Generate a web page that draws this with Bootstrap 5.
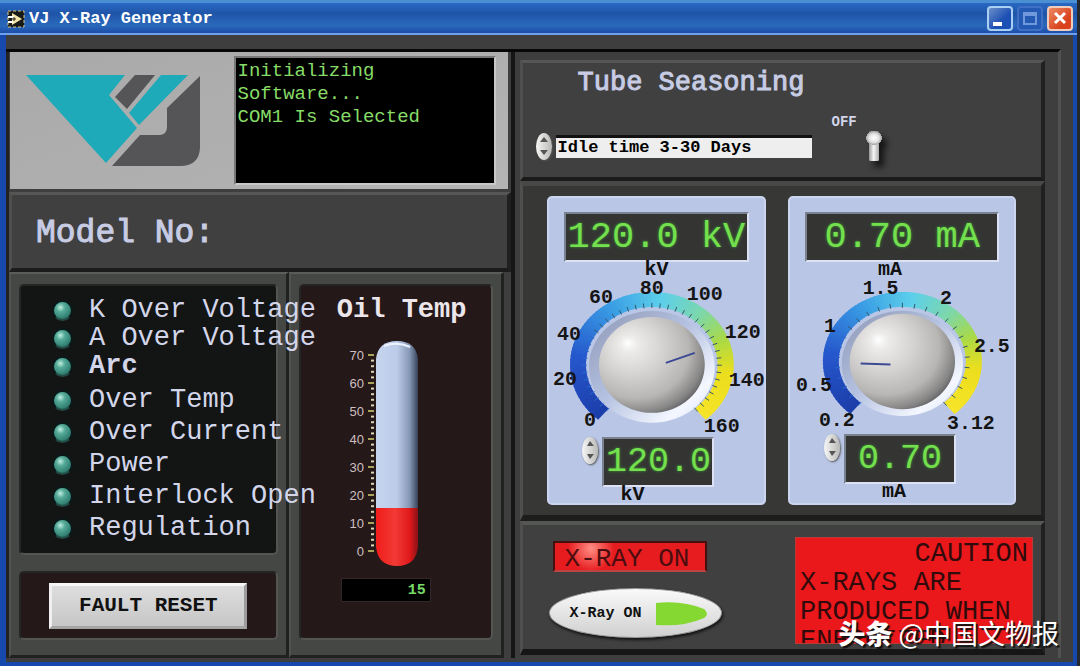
<!DOCTYPE html>
<html lang="en">
<head>
<meta charset="utf-8">
<meta name="viewport" content="width=device-width, initial-scale=1">
<title>VJ X-Ray Generator</title>
<link href="https://cdn.jsdelivr.net/npm/bootstrap@5.3.0/dist/css/bootstrap.min.css" rel="stylesheet">
<style>
  body { background: #25282c; font-family: "Liberation Mono", "Noto Sans CJK SC", monospace; color: #d3d6ea; line-height: 1; }
  .app-window { background: #3d3e3d; border: solid #1749ac; border-width: 0 4px 4px 6px; margin-right: 3px; position: relative; }
  .title-bar { height: 35px; margin: 0 -4px 0 -6px; padding: 1px 4px 0 7px; border-top: 3px solid #4a8fd2; border-bottom: 2px solid #6ea1ea; background: linear-gradient(#2a68c4, #1f55a8 35%, #2a68bb 75%, #1c4da9); color: #fff; }
  .title-text { font-size: 17px; font-weight: 700; }
  .win-btn { width: 26px; height: 25px; border: 2px solid #a9d0f3; border-radius: 4px; background: linear-gradient(135deg, #6d8fc8, #1c50b4 60%); padding: 0; }
  .win-btn.dim { border-color: #3f70c4; background: #2459b4; }
  .win-btn.shut { border-color: #f1cdbd; background: linear-gradient(135deg, #ec8a62, #d9421c 70%); }
  .win-btn svg { display: block; width: 100%; height: 100%; }
  .workspace { display: grid; grid-template-columns: minmax(0, 510fr) minmax(0, 545fr); margin: 14px 12px 4px 0; border-top: 3px solid #080808; border-right: 3px solid #50524f; }
  .col-left { border-right: 4px solid #141515; border-left: 3px solid #222; }
  .panel { background: #3f403f; border: solid; border-width: 3px 4px 4px 3px; border-color: #555754 #1f201f #1a1b1a #4f504e; }
  .logo-panel { background: linear-gradient(160deg, #a9a9a9, #b4b4b4); height: 137px; padding: 4px 12px 4px 8px; margin: 0 3px 3px 1px; }
  .terminal { background: #000; color: #87dc68; width: 262px; font-size: 19px; line-height: 23px; border: 2px solid; border-color: #777 #c8c8c8 #c8c8c8 #777; padding: 2px; }
  .model-panel { height: 80px; padding: 4px 24px 0; }
  .model-text { font-size: 33px; color: #c7cce4; -webkit-text-stroke: 1px #c7cce4; }
  .lower-left { grid-template-columns: minmax(0, 280fr) minmax(0, 215fr); padding-right: 7px; }
  .raised { background: #454745; border: solid; border-width: 2px 3px 3px 2px; border-color: #5b5d5a #202120 #202120 #51534f; padding: 10px 8px 15px; }
  .well { border-radius: 5px; background: #241819; border: 2px solid; border-color: #252525 #535552 #535552 #252525; }
  .fault-well { background: #121514; padding: 10px 0 9px 31px; font-size: 27px; position: relative; z-index: 2; }
  .fault-well li { height: 32px; white-space: nowrap; }
  .fault-well .tight li { height: 28px; }
  .led { width: 21px; height: 21px; border-radius: 50%; flex: none; border: 2px solid #0a1919; border-bottom-color: #234b45; background: radial-gradient(circle at 38% 32%, #c0eee0 0, #55aa98 28%, #358577 65%, #19483f 100%); }
  .reset-btn { width: 198px; height: 46px; font-size: 21px; font-weight: 700; color: #111; border: 3px solid; border-color: #f7f7f7 #9c9c9c #a5a5a5 #f0f0f0; background: linear-gradient(#dedede, #c6c6c6); padding: 0; }
  .oil-title { font-size: 27px; font-weight: 700; color: #ece6ea; padding-left: 12px; }
  .oil-out { width: 90px; height: 24px; background: #000; color: #78da66; font-size: 15px; font-weight: 700; border: 1px solid #332628; margin-right: 20px; }
  .col-right { padding: 8px 13px 3px 5px; }
  .tube-panel { height: 121px; padding: 4px 12px 0 13px; }
  .tube-title { font-size: 27px; color: #c7cce4; -webkit-text-stroke: 1px #c7cce4; padding-left: 42px; }
  .season { width: 256px; height: 23px; font-size: 17px; font-weight: 700; background: #eee; color: #000; border: 0; border-top: 3px solid #111; border-radius: 0; appearance: none; padding: 0 2px; line-height: 20px; }
  .spin { width: 16px; height: 27px; border-radius: 50%; background: linear-gradient(90deg, #f6f6f6, #b9bab6); box-shadow: 1px 1px 2px #555; overflow: hidden; flex: none; }
  .spin button { border: 0; background: none; padding: 0; height: 13px; line-height: 0; }
  .off-text { font-size: 14px; font-weight: 700; }
  .toggle { appearance: none; border: 0; width: 18px; height: 30px; margin: 0; background: radial-gradient(ellipse 8px 7px at 50% 7px, #fff 0, #e4e4e4 60%, #aaa 96%, transparent 100%), linear-gradient(90deg, transparent 20%, #999 22%, #f5f5f5 48%, #aaa 78%, transparent 80%); border-radius: 8px 8px 6px 6px; filter: drop-shadow(5px 6px 3px #151515); }
  .gauge-panel { padding: 10px 25px 11px 24px; background: #373736; height: 340px; border-top: 5px solid #4a4846; border-bottom: 6px solid #1d1d1c; }
  .gauge-grid { grid-template-columns: minmax(0, 219fr) minmax(0, 227fr); column-gap: 22px; }
  .gauge { background: #b9c6e6; border: 2px solid #cbd5ef; border-radius: 5px; color: #111; font-size: 20px; padding: 14px 15px 0; }
  .readout { background: #343533; color: #74e04d; font-size: 37px; text-shadow: 0 0 3px #3f9c35; border: 2px solid; border-color: #7a8191 #dce2f4 #dce2f4 #7a8191; height: 50px; text-align: center; border-radius: 0; padding: 0; white-space: pre; }
  .set-out { width: 112px; font-size: 35px; }
  .unit { font-weight: 700; height: 16px; line-height: 16px; }
  .dial { width: 100%; height: auto; display: block; overflow: visible; }
  .dial text { font-size: 20px; font-weight: 700; fill: #151515; text-anchor: middle; }
  .thermo text { font-family: "Liberation Sans", sans-serif; font-size: 13px; fill: #cfbfc0; text-anchor: end; }
  .ray-panel { padding: 12px 8px 5px 26px; border-top-width: 4px; border-bottom: 6px solid #161616; }
  .ray-lamp { width: 154px; height: 31px; font-size: 26px; line-height: 32px; color: #4c0d10; border: 2px solid #411; border-bottom-color: #b44; background: radial-gradient(circle at 24% 20%, #ff8d83, transparent 20%), #e71c1f; padding-left: 10px; }
  .ray-btn { width: 173px; height: 50px; border-radius: 50%; border: 1px solid #999; background: linear-gradient(#fafafa, #d0d0d0); box-shadow: 1px 2px 3px #111; font-size: 15px; font-weight: 700; color: #111; padding: 0 12px 0 20px; }
  .caution { width: 238px; height: 107px; background: #ea171b; border: 1px solid #bb3a38; color: #310b0c; font-size: 27px; line-height: 29px; padding: 2px 4px; overflow: hidden; }
  .stamp { position: absolute; right: 14px; bottom: 13px; font-family: "Noto Sans CJK SC", sans-serif; font-size: 27px; line-height: 32px; color: #fff; text-shadow: 2px 2px 1px #111; z-index: 5; }
  .stamp b { font-weight: 900; }
</style>
</head>
<body>
<div class="app-window min-vh-100 d-flex flex-column">
  <header class="title-bar d-flex align-items-center">
    <svg width="18" height="18" viewBox="0 0 18 18" aria-hidden="true"><path d="M1 1h16v16H1z" fill="#181a17" stroke="#d9c983" stroke-dasharray="3 2"/><path d="M5 3l10 6-10 6z" fill="#f4e6a8"/><path d="M1 7h6M1 12h5" stroke="#fff" stroke-width="2"/><path d="M7 7v4M5 9h4" stroke="#222"/></svg>
    <span class="title-text ms-1 me-auto">VJ X-Ray Generator</span>
    <div class="d-flex gap-1">
      <button class="win-btn" aria-label="Minimize"><svg viewBox="0 0 22 21"><path d="M4 14h9v4H4z" fill="#fff"/></svg></button>
      <button class="win-btn dim" aria-label="Maximize"><svg viewBox="0 0 22 21"><path d="M5 5h12v11H5zM5 7h12" fill="none" stroke="#7098dc" stroke-width="2"/></svg></button>
      <button class="win-btn shut" aria-label="Close"><svg viewBox="0 0 22 21"><path d="M6 5l10 10M16 5L6 15" stroke="#fff" stroke-width="3"/></svg></button>
    </div>
  </header>

  <main class="workspace flex-grow-1">
    <section class="col-left d-flex flex-column">
      <div class="logo-panel d-flex justify-content-between">
        <svg width="190" height="120" viewBox="18 56 190 120" role="img" aria-label="VJ logo">
          <path d="M26 75H125L109 95 137 128 106 163z" fill="#1eaab8"/>
          <path d="M135 75H155L127 109 115 97z" fill="#555457"/>
          <path d="M161 75H188L139 125 129 113z" fill="#1eaab8"/>
          <path d="M200 76V148Q199 165 182 166H112L140 135H160Q167 134 167 127V108z" fill="#555457"/>
        </svg>
        <div class="terminal">Initializing<br>Software...<br>COM1 Is Selected</div>
      </div>
      <div class="panel model-panel d-flex align-items-center"><span class="model-text">Model No:</span></div>
      <div class="lower-left d-grid flex-grow-1">
        <div class="raised d-flex flex-column">
          <div class="well fault-well">
            <ul class="list-unstyled mb-1 tight">
              <li class="d-flex align-items-center gap-3"><span class="led"></span>K Over Voltage</li>
              <li class="d-flex align-items-center gap-3"><span class="led"></span>A Over Voltage</li>
              <li class="d-flex align-items-center gap-3"><span class="led"></span><b>Arc</b></li>
            </ul>
            <ul class="list-unstyled mb-0">
              <li class="d-flex align-items-center gap-3"><span class="led"></span>Over Temp</li>
              <li class="d-flex align-items-center gap-3"><span class="led"></span>Over Current</li>
              <li class="d-flex align-items-center gap-3"><span class="led"></span>Power</li>
              <li class="d-flex align-items-center gap-3"><span class="led"></span>Interlock Open</li>
              <li class="d-flex align-items-center gap-3"><span class="led"></span>Regulation</li>
            </ul>
          </div>
          <div class="well flex-grow-1 mt-3 d-flex align-items-center justify-content-center">
            <button class="reset-btn">FAULT RESET</button>
          </div>
        </div>
        <div class="raised d-flex flex-column">
          <div class="well flex-grow-1 d-flex flex-column align-items-center">
            <h2 class="oil-title mt-2 mb-2">Oil Temp</h2>
            <svg class="thermo" width="150" height="236" viewBox="320 333 150 236" role="img" aria-label="Oil temperature 15">
              <defs>
                <linearGradient id="glass"><stop offset="0" stop-color="#c6d4ee"/><stop offset=".5" stop-color="#bccce9"/><stop offset=".8" stop-color="#8597b5"/><stop offset="1" stop-color="#37425a"/></linearGradient>
                <linearGradient id="fluid"><stop offset="0" stop-color="#f01c1a"/><stop offset=".45" stop-color="#f23a35"/><stop offset=".8" stop-color="#e0191b"/><stop offset="1" stop-color="#8a1216"/></linearGradient>
              </defs>
              <path d="M375 507V358Q377 340 396 340T417 358V507z" fill="url(#glass)"/>
              <path d="M375 507H417V546Q415 565 396 565T375 546z" fill="url(#fluid)"/>
              <path d="M383 345Q396 340 409 346" stroke="#edf3ff" stroke-width="2" fill="none"/>
            </svg>
            <output class="oil-out d-flex align-items-center justify-content-end px-1 mt-2" aria-label="Oil temperature">15</output>
          </div>
        </div>
      </div>
    </section>

    <section class="col-right d-flex flex-column">
      <div class="panel tube-panel">
        <h1 class="tube-title mb-0">Tube Seasoning</h1>
        <div class="d-flex align-items-center pt-3">
          <span class="spin d-flex flex-column"><button aria-label="Previous mode"><svg width="8" height="5"><path d="M0 5h8L4 0z" fill="#555"/></svg></button><button aria-label="Next mode"><svg width="8" height="5"><path d="M0 0h8L4 5z" fill="#555"/></svg></button></span>
          <select class="season ms-1" aria-label="Tube seasoning mode"><option>Idle time 3-30 Days</option></select>
          <label class="off-text ms-3 mb-5 ps-1" for="season-switch">OFF</label>
          <input class="toggle ms-2" id="season-switch" type="checkbox">
        </div>
      </div>

      <div class="panel gauge-panel">
        <div class="gauge-grid d-grid h-100">
          <div class="gauge">
            <output class="readout d-flex align-items-center justify-content-center">120.0 kV</output>
            <div class="unit text-center">kV</div>
            <svg class="dial" id="dial-kv" viewBox="564 279 186 159" role="img" aria-label="Voltage dial"></svg>
            <div class="d-flex justify-content-center pe-3">
              <span class="spin d-flex flex-column"><button aria-label="Raise kV"><svg width="7" height="5"><path d="M0 5h7L3 0z" fill="#555"/></svg></button><button aria-label="Lower kV"><svg width="7" height="5"><path d="M0 0h7L3 5z" fill="#555"/></svg></button></span>
              <input class="readout set-out ms-1" aria-label="Voltage setpoint" value="120.0">
            </div>
            <div class="unit text-center pe-5">kV</div>
          </div>
          <div class="gauge">
            <output class="readout d-flex align-items-center justify-content-center">0.70 mA</output>
            <div class="unit text-center pe-4">mA</div>
            <svg class="dial" id="dial-ma" viewBox="804 278 195 157" role="img" aria-label="Current dial"></svg>
            <div class="d-flex justify-content-center pe-4">
              <span class="spin d-flex flex-column"><button aria-label="Raise mA"><svg width="7" height="5"><path d="M0 5h7L3 0z" fill="#555"/></svg></button><button aria-label="Lower mA"><svg width="7" height="5"><path d="M0 0h7L3 5z" fill="#555"/></svg></button></span>
              <input class="readout set-out ms-1" aria-label="Current setpoint" value="0.70">
            </div>
            <div class="unit text-center pe-3">mA</div>
          </div>
        </div>
      </div>

      <div class="panel ray-panel d-flex justify-content-between flex-grow-1">
        <div>
          <div class="ray-lamp ms-1 mt-1 mb-3">X-RAY ON</div>
          <button class="ray-btn d-flex align-items-center justify-content-between">X-Ray ON
            <svg width="55" height="27" viewBox="0 0 55 27" aria-hidden="true"><path d="M2 3Q28 0 50 9 56 14 50 18 30 27 2 25z" fill="#85d731"/></svg>
          </button>
        </div>
        <div class="caution"><div class="text-end">CAUTION</div>X-RAYS ARE<br>PRODUCED WHEN<br>ENERGIZED</div>
      </div>
    </section>
  </main>
  <div class="stamp"><b>头条</b> @中国文物报</div>
</div>

<script src="https://cdn.jsdelivr.net/npm/bootstrap@5.3.0/dist/js/bootstrap.bundle.min.js"></script>
<script>
  const NS = 'http://www.w3.org/2000/svg';
  function add(parent, tag, attrs, text) {
    const el = document.createElementNS(NS, tag);
    for (const k in attrs) el.setAttribute(k, attrs[k]);
    if (text !== undefined) el.textContent = text;
    parent.appendChild(el);
    return el;
  }
  // Colour stops along the sweep, from minimum to maximum
  const stops = [[0, [28, 62, 170]], [.2, [38, 88, 205]], [.38, [58, 158, 228]], [.52, [92, 207, 235]], [.64, [125, 215, 170]], [.74, [170, 218, 70]], [.84, [235, 222, 30]], [1, [246, 228, 40]]];
  function hue(t) {
    let i = 1;
    while (i < stops.length - 1 && stops[i][0] < t) i++;
    const [a, c] = stops[i - 1], [b, d] = stops[i], k = Math.min(1, (t - a) / (b - a));
    return 'rgb(' + c.map((v, n) => Math.round(v + (d[n] - v) * k)).join(',') + ')';
  }
  function dial(id, g) {
    const svg = document.getElementById(id), sweep = 278;
    const pt = (t, rx, ry) => { const a = (t * sweep - sweep / 2) * Math.PI / 180; return [g.cx + rx * Math.sin(a), g.cy - ry * Math.cos(a)]; };
    const defs = add(svg, 'defs', {});
    const rim = add(defs, 'linearGradient', { id: id + '-rim', x1: 0, y1: 0, x2: 1, y2: 1 });
    [[0, '#8d97b4'], [.45, '#b4c1e0'], [.8, '#f4f7ff'], [1, '#d5def3']].forEach(s => add(rim, 'stop', { offset: s[0], 'stop-color': s[1] }));
    const ball = add(defs, 'radialGradient', { id: id + '-ball', cx: .38, cy: .38, fx: .27, fy: .27, r: .72 });
    [[0, '#fff'], [.12, '#ecebea'], [.4, '#d5d3d1'], [.7, '#b8b6b4'], [.88, '#858484'], [1, '#4a4b50']].forEach(s => add(ball, 'stop', { offset: s[0], 'stop-color': s[1] }));
    const n = 90;
    for (let i = 0; i < n; i++) {
      const a = i / n, b = Math.min(1, (i + 1.4) / n);
      const p = [pt(a, g.rx, g.ry), pt(b, g.rx, g.ry), pt(b, g.rx - 16, g.ry - 15), pt(a, g.rx - 16, g.ry - 15)];
      add(svg, 'polygon', { points: p.map(q => q.join(',')).join(' '), fill: hue(a) });
    }
    add(svg, 'ellipse', { cx: g.cx, cy: g.cy + 2, rx: g.rx - 19, ry: g.ry - 17, fill: `url(#${id}-rim)` });
    for (let i = 0; i <= g.ticks; i++) {
      const t = i / g.ticks, p = pt(t, g.rx - 17, g.ry - 16), q = pt(t, g.rx - 12, g.ry - 11);
      add(svg, 'line', { x1: p[0], y1: p[1], x2: q[0], y2: q[1], stroke: t < .3 ? '#2c68ca' : '#34566a', 'stroke-width': 1 });
    }
    add(svg, 'ellipse', { cx: g.cx, cy: g.cy, rx: 53, ry: 48, fill: `url(#${id}-ball)` });
    add(svg, 'line', Object.assign({ stroke: '#3c4a94', 'stroke-width': 2 }, g.needle));
    g.labels.forEach(l => add(svg, 'text', { x: l[1], y: l[2] }, l[0]));
  }
  dial('dial-kv', { cx: 652, cy: 366, rx: 82, ry: 73, ticks: 40, needle: { x1: 666, y1: 364, x2: 695, y2: 354 },
    labels: [['0', 590, 427], ['20', 565, 386], ['40', 569, 341], ['60', 601, 304], ['80', 652, 295], ['100', 705, 301], ['120', 743, 339], ['140', 747, 387], ['160', 722, 433]] });
  dial('dial-ma', { cx: 902, cy: 362, rx: 80, ry: 70, ticks: 26, needle: { x1: 860, y1: 364, x2: 890, y2: 365 },
    labels: [['0.2', 836, 427], ['0.5', 813, 392], ['1', 829, 332], ['1.5', 880, 294], ['2', 946, 304], ['2.5', 992, 352], ['3.12', 971, 430]] });

  const thermo = document.querySelector('.thermo');
  for (let v = 0; v <= 70; v += 2) {
    const y = 550 - v * 2.8, major = v % 10 === 0;
    add(thermo, 'line', { x1: major ? 367 : 370, y1: y, x2: 373, y2: y, stroke: major ? '#a9a25a' : '#ddd5b4', 'stroke-width': 2 });
    if (major) add(thermo, 'text', { x: 363, y: y + 5 }, v);
  }
</script>
</body>
</html>
